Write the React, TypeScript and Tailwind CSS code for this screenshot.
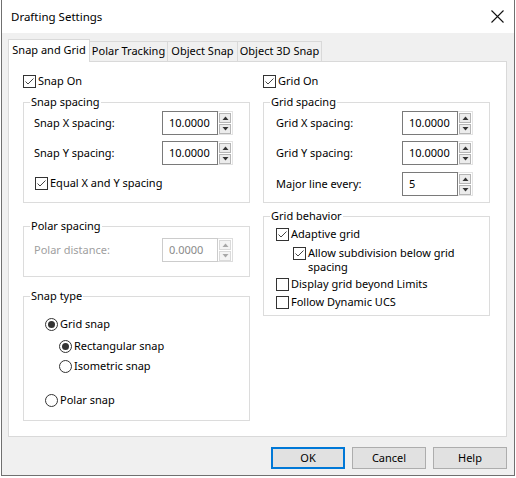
import type { ReactNode } from "react";

const FONT = { fontFamily: '"Noto Sans", "Open Sans", sans-serif' };

function CheckBox({ checked }: { checked?: boolean }) {
  return (
    <span className="flex h-[13px] w-[13px] shrink-0 items-center justify-center border border-[#333333] bg-white">
      {checked && (
        <svg width="11" height="11" viewBox="0 0 11 11">
          <polyline points="1.5,5.5 4,8 9.5,2.5" fill="none" stroke="#444444" strokeWidth="1" />
        </svg>
      )}
    </span>
  );
}

function Check({ label, checked, className = "" }: { label: ReactNode; checked?: boolean; className?: string }) {
  return (
    <div className={`flex items-start gap-[2px] ${className}`}>
      <div className="flex h-[14px] items-center">
        <CheckBox checked={checked} />
      </div>
      <span className="leading-[14px]">{label}</span>
    </div>
  );
}

function Radio({ label, checked, className = "" }: { label: string; checked?: boolean; className?: string }) {
  return (
    <div className={`flex h-[14px] items-center gap-[2px] ${className}`}>
      <span className="flex h-[13px] w-[13px] items-center justify-center rounded-full border border-[#333333] bg-white">
        {checked && <span className="h-[7px] w-[7px] rounded-full bg-[#333333]" />}
      </span>
      <span className="leading-[14px]">{label}</span>
    </div>
  );
}

function Spinner({ value, disabled }: { value: string; disabled?: boolean }) {
  const btn = disabled ? "border-[#dadada] bg-[#f4f4f4]" : "border-[#b5b5b5] bg-[#ececec]";
  const arrow = disabled ? "#a8a8a8" : "#333333";
  return (
    <div className="flex h-[24px] w-[71px]">
      <div
        className={`flex w-[56px] items-center border pl-[6px] ${
          disabled ? "border-[#cccccc] text-[#8a8a8a]" : "border-[#7a7a7a] text-black"
        }`}
      >
        {value}
      </div>
      <div className={`flex w-[15px] flex-col justify-center gap-[1px] border-y border-r px-[1px] ${disabled ? "border-[#dddddd]" : "border-[#e3e3e3]"}`}>
        <div className={`flex h-[10px] items-center justify-center border ${btn}`}>
          <svg width="7" height="4" viewBox="0 0 7 4">
            <polygon points="0.5,4 6.5,4 3.5,0.5" fill={arrow} />
          </svg>
        </div>
        <div className={`flex h-[10px] items-center justify-center border ${btn}`}>
          <svg width="7" height="4" viewBox="0 0 7 4">
            <polygon points="0.5,0 6.5,0 3.5,3.5" fill={arrow} />
          </svg>
        </div>
      </div>
    </div>
  );
}

function Group({ title, className = "", children }: { title: string; className?: string; children: ReactNode }) {
  return (
    <div className={`relative border border-[#dcdcdc] ${className}`}>
      <span className="absolute -top-[9px] left-[6px] bg-white px-[1px] leading-[16px]">{title}</span>
      {children}
    </div>
  );
}

function SpinRow({ label, value, disabled }: { label: string; value: string; disabled?: boolean }) {
  return (
    <div className="flex h-[24px] items-center justify-between">
      <span className={disabled ? "text-[#a0a0a0]" : ""}>{label}</span>
      <Spinner value={value} disabled={disabled} />
    </div>
  );
}

const TABS = ["Polar Tracking", "Object Snap", "Object 3D Snap"];
const TAB_W = ["w-[78px]", "w-[70px]", "w-[84px]"];

export default function App() {
  return (
    <div className="h-[478px] w-[516px] bg-white text-[11px] text-black" style={FONT}>
      <div className="ml-[1px] flex h-[476px] w-[514px] flex-col border-x border-b border-[#707070]">
        <div className="flex h-[33px] items-center justify-between bg-white pl-[9px] pr-[10px]">
          <span className="text-[11.5px]">Drafting Settings</span>
          <svg width="13" height="13" viewBox="0 0 13 13">
            <path d="M0.5 0.5 L12.5 12.5 M12.5 0.5 L0.5 12.5" stroke="#111111" strokeWidth="1.1" />
          </svg>
        </div>

        <div className="flex flex-1 flex-col bg-[#f0f0f0] pt-[6px]">
          <div className="ml-[6px] flex items-end whitespace-nowrap">
            <div className="relative z-10 -mb-px flex h-[23px] w-[82px] items-start justify-center border-x border-t border-[#d9d9d9] bg-white pt-[2px]">
              Snap and Grid
            </div>
            {TABS.map((t, i) => (
              <div
                key={t}
                className={`flex h-[20px] ${TAB_W[i]} items-center justify-center border-t border-r border-[#d9d9d9] bg-[#f0f0f0]`}
              >
                {t}
              </div>
            ))}
          </div>

          <div className="ml-[6px] flex h-[376px] w-[499px] gap-[13px] border border-[#d9d9d9] bg-white pl-[14px] pt-[12px]">
            <div className="flex w-[227px] flex-col">
              <Check label="Snap On" checked />
              <Group title="Snap spacing" className="mt-[14px] h-[101px] pl-[10px] pr-[16px] pt-[8px]">
                <SpinRow label="Snap X spacing:" value="10.0000" />
                <div className="mt-[6px]">
                  <SpinRow label="Snap Y spacing:" value="10.0000" />
                </div>
                <Check label="Equal X and Y spacing" checked className="ml-[1px] mt-[11px]" />
              </Group>
              <Group title="Polar spacing" className="mt-[23px] h-[51px] pl-[10px] pr-[16px] pt-[11px]">
                <SpinRow label="Polar distance:" value="0.0000" disabled />
              </Group>
              <Group title="Snap type" className="mt-[19px] h-[125px] pl-[21px] pt-[20px]">
                <Radio label="Grid snap" checked />
                <Radio label="Rectangular snap" checked className="ml-[14px] mt-[8px]" />
                <Radio label="Isometric snap" className="ml-[14px] mt-[6px]" />
                <Radio label="Polar snap" className="mt-[20px]" />
              </Group>
            </div>

            <div className="flex w-[227px] flex-col">
              <Check label="Grid On" checked />
              <Group title="Grid spacing" className="mt-[14px] h-[101px] pl-[12px] pr-[16px] pt-[8px]">
                <SpinRow label="Grid X spacing:" value="10.0000" />
                <div className="mt-[6px]">
                  <SpinRow label="Grid Y spacing:" value="10.0000" />
                </div>
                <div className="mt-[7px]">
                  <SpinRow label="Major line every:" value="5" />
                </div>
              </Group>
              <Group title="Grid behavior" className="mt-[13px] h-[100px] pl-[12px] pt-[10px]">
                <Check label="Adaptive grid" checked />
                <Check
                  label={
                    <>
                      Allow subdivision below grid
                      <br />
                      spacing
                    </>
                  }
                  checked
                  className="ml-[17px] mt-[5px] leading-[13px]"
                />
                <Check label="Display grid beyond Limits" className="mt-[3px]" />
                <Check label="Follow Dynamic UCS" className="mt-[4px]" />
              </Group>
            </div>
          </div>

          <div className="mr-[7px] mt-[10px] flex justify-end gap-[7px]">
            <button className="h-[22px] w-[74px] border-2 border-[#0078d7] bg-[#e1e1e1]">OK</button>
            <button className="h-[22px] w-[74px] border border-[#adadad] bg-[#e1e1e1]">Cancel</button>
            <button className="h-[22px] w-[74px] border border-[#adadad] bg-[#e1e1e1]">Help</button>
          </div>
        </div>
      </div>
    </div>
  );
}
